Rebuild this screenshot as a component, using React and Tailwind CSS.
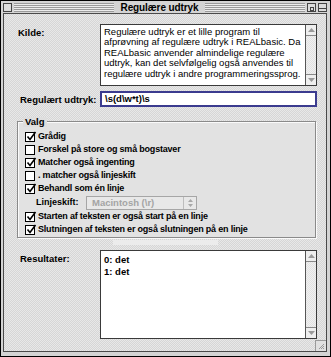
import React from "react";

// ===== Small chrome pieces =====
const Stripes = ({ className = "" }) => (
    <div
        className={`h-[9px] bg-[repeating-linear-gradient(to_bottom,#9a9a9a_0px,#9a9a9a_1px,#ececec_1px,#ececec_2px)] ${className}`}
    />
);

const BoxButton = ({ children }) => (
    <div className="w-[9px] h-[9px] border border-[#444] bg-[#dcdcdc] flex items-center justify-center">
        {children}
    </div>
);

const Check = ({ on }) => (
    <div className="relative w-[10px] h-[10px] border border-black bg-white shrink-0">
        {on && (
            <svg
                className="absolute -top-[2px] left-0"
                width="11"
                height="11"
                viewBox="0 0 11 11"
            >
                <path d="M1.5 5.5 L4 8.5 L9.5 1" stroke="#000" strokeWidth="1.6" fill="none" />
            </svg>
        )}
    </div>
);

const CheckRow = ({ on, label }) => (
    <div className="h-[13px] flex items-center gap-[3px]">
        <Check on={on} />
        <span className="text-[9px] font-bold leading-none text-black tracking-[-0.2px]">{label}</span>
    </div>
);

const ScrollBar = () => (
    <div className="w-[11px] border-l border-[#555] flex flex-col bg-[repeating-conic-gradient(#e2e2e2_0_25%,#f0f0f0_0_50%)] bg-[length:2px_2px]">
        <div className="h-[11px] border-b border-[#888] bg-[#eeeeee] flex items-center justify-center">
            <svg width="7" height="4" viewBox="0 0 7 4">
                <path d="M3.5 0 L7 4 L0 4 Z" fill="#9a9a9a" />
            </svg>
        </div>
        <div className="flex-1" />
        <div className="h-[11px] border-t border-[#888] bg-[#eeeeee] flex items-center justify-center">
            <svg width="7" height="4" viewBox="0 0 7 4">
                <path d="M0 0 L7 0 L3.5 4 Z" fill="#9a9a9a" />
            </svg>
        </div>
    </div>
);

const Label = ({ children, className = "" }) => (
    <div className={`text-[9.5px] font-bold text-black leading-none ${className}`}>{children}</div>
);

const sourceLines = [
    "Regulære udtryk er et lille program til",
    "afprøvning af regulære udtryk i REALbasic. Da",
    "REALbasic anvender almindelige regulære",
    "udtryk, kan det selvfølgelig også anvendes til",
    "regulære udtryk i andre programmeringssprog.",
];

// ===== App =====
export default function App() {
    return (
        <div className="w-[331px] h-[357px] border border-black bg-[#d4d4d4] flex flex-col font-['Liberation_Sans',Arial,sans-serif] select-none">
            {/* title bar */}
            <div className="h-[11px] mt-[1px] flex items-center pl-[2px] pr-[3px] gap-[2px]">
                <BoxButton />
                <Stripes className="flex-1" />
                <div className="px-[5px] text-[10px] font-bold leading-none text-black tracking-[-0.1px]">
                    Regulære udtryk
                </div>
                <Stripes className="flex-1" />
                <BoxButton>
                    <div className="w-[4px] h-[4px] border border-[#444] self-end mb-[0px]" />
                </BoxButton>
                <BoxButton>
                    <div className="w-[7px] h-[3px] border-b border-[#444]" />
                </BoxButton>
            </div>

            {/* window frame */}
            <div className="flex-1 flex pl-[2px] pr-[3px] pb-[4px]">
                <div className="relative flex-1 flex flex-col border border-[#4a4a4a] bg-[repeating-conic-gradient(#d6d6d6_0_25%,#e8e8e8_0_50%)] bg-[length:2px_2px]">
                    {/* Kilde */}
                    <div className="flex mt-[10px]">
                        <Label className="w-[96px] pl-[14px] pt-[4px]">Kilde:</Label>
                        <div className="w-[217px] h-[62px] border border-[#3a3a3a] bg-white flex">
                            <div className="flex-1 pl-[3px] pt-[2px] text-[9.5px] leading-[10.4px] text-black overflow-hidden">
                                {sourceLines.map((l) => (
                                    <div key={l} className="whitespace-nowrap">{l}</div>
                                ))}
                            </div>
                            <ScrollBar />
                        </div>
                    </div>

                    {/* Regulært udtryk */}
                    <div className="flex mt-[5px]">
                        <Label className="w-[96px] pl-[16px] pt-[4px]">Regulært udtryk:</Label>
                        <div className="w-[217px] h-[16px] border-2 border-[#3b3b8f] bg-white flex items-center pl-[3px]">
                            <span className="text-[9.5px] font-bold leading-none text-black">\s(d\w*t)\s</span>
                        </div>
                    </div>

                    {/* Valg group */}
                    <div className="relative ml-[13px] mt-[14px] w-[299px] h-[117px] border border-[#8a8a8a] shadow-[inset_1px_1px_0_#fafafa,1px_1px_0_#fafafa] bg-[#e2e2e2] pt-[8px] pl-[7px]">
                        <div className="absolute -top-[5px] left-[5px] px-[2px] bg-[#dedede]">
                            <Label>Valg</Label>
                        </div>
                        <CheckRow on label="Grådig" />
                        <CheckRow label="Forskel på store og små bogstaver" />
                        <CheckRow on label="Matcher også ingenting" />
                        <CheckRow label=". matcher også linjeskift" />
                        <CheckRow on label="Behandl som én linje" />
                        <div className="h-[15px] flex items-center pl-[11px]">
                            <span className="w-[50px] text-[9px] font-bold leading-none text-black">Linjeskift:</span>
                            <div className="w-[111px] h-[14px] border border-[#a6a6a6] bg-[#e8e8e8] flex items-center">
                                <span className="flex-1 pl-[5px] text-[9.5px] font-bold leading-none text-[#a4a4a4]">
                                    Macintosh (\r)
                                </span>
                                <div className="w-[13px] h-full border-l border-[#bdbdbd] flex items-center justify-center">
                                    <svg width="5" height="8" viewBox="0 0 5 8">
                                        <path d="M2.5 0 L5 3 L0 3 Z M0 5 L5 5 L2.5 8 Z" fill="#a8a8a8" />
                                    </svg>
                                </div>
                            </div>
                        </div>
                        <CheckRow on label="Starten af teksten er også start på en linje" />
                        <CheckRow on label="Slutningen af teksten er også slutningen på en linje" />
                    </div>

                    <div className="ml-[109px] mt-[2px] w-[105px] h-[5px] bg-[#ececec]" />

                    {/* Resultater */}
                    <div className="flex mt-[5px]">
                        <Label className="w-[96px] pl-[16px] pt-[4px]">Resultater:</Label>
                        <div className="w-[217px] h-[89px] border border-[#3a3a3a] bg-white flex">
                            <div className="flex-1 pl-[3px] pt-[3px] text-[9.5px] font-bold leading-[12px] text-black">
                                <div>0: det</div>
                                <div>1: det</div>
                            </div>
                            <ScrollBar />
                        </div>
                    </div>

                    {/* grow box */}
                    <div className="absolute right-0 bottom-0 w-[11px] h-[11px] border-l border-t border-[#9a9a9a] bg-[#e0e0e0] flex items-center justify-center">
                        <svg width="7" height="7" viewBox="0 0 7 7">
                            <path d="M1 6 L6 1 M3 6 L6 3 M5 6 L6 5" stroke="#9a9a9a" strokeWidth="1" />
                        </svg>
                    </div>
                </div>
            </div>
        </div>
    );
}
